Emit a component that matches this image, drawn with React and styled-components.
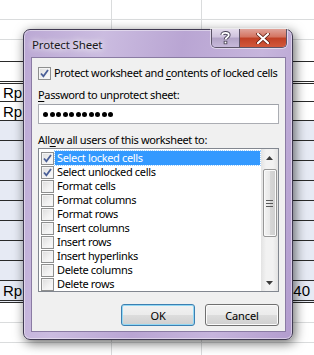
import React from 'react';
import styled, { createGlobalStyle, css } from 'styled-components';

const GlobalStyle = createGlobalStyle`
  html, body {
    margin: 0;
    padding: 0;
    background: #ffffff;
  }
  body {
    font-family: 'Noto Sans', 'Open Sans', sans-serif;
  }
`;

const Screen = styled.div`
  position: relative;
  width: 314px;
  height: 355px;
  overflow: hidden;
  background: #ffffff;
`;

/* ---------- spreadsheet behind the dialog ---------- */

const Sheet = styled.div`
  display: flex;
  flex-direction: column;
  width: 314px;
  height: 355px;
  background-image: linear-gradient(#dadcdd, #dadcdd), linear-gradient(#dadcdd, #dadcdd);
  background-size: 1px 100%, 1px 100%;
  background-position: 111px 0, 201px 0;
  background-repeat: no-repeat;
`;

const SheetRow = styled.div`
  flex: 0 0 ${({ $h }) => $h}px;
  box-sizing: border-box;
  display: flex;
  align-items: center;
  justify-content: space-between;
  padding: 0 4px 0 3px;
  font-family: 'Liberation Sans', Arial, sans-serif;
  font-size: 15px;
  color: #000;
  background-color: ${({ $fill }) => ($fill ? '#e6eaf4' : 'transparent')};
  ${({ $line }) =>
    $line === 'light' &&
    css`
      border-bottom: 1px solid #dadcdd;
    `}
  ${({ $line }) =>
    $line === 'dark' &&
    css`
      border-bottom: 1px solid #2a2a2a;
    `}
  ${({ $line }) =>
    $line === 'double' &&
    css`
      border-bottom: 3px double #2a2a2a;
    `}
`;

/* ---------- dialog ---------- */

const Dialog = styled.div`
  position: absolute;
  left: 23px;
  top: 29px;
  width: 270px;
  height: 311px;
  box-sizing: border-box;
  display: flex;
  flex-direction: column;
  padding: 0 6px 7px 7px;
  border: 1px solid #403a52;
  border-radius: 7px;
  background: linear-gradient(100deg, #bba8d4 0%, #cbbce0 25%, #b9a5d3 50%, #c6b5dc 75%, #b29cce 100%);
  box-shadow: inset 0 0 0 1px rgba(255, 255, 255, 0.45), 2px 3px 12px rgba(0, 0, 0, 0.6);
`;

const TitleBar = styled.div`
  flex: 0 0 27px;
  display: flex;
  align-items: flex-start;
  justify-content: space-between;
`;

const Title = styled.div`
  margin-top: 7px;
  margin-left: 1px;
  font-family: 'Noto Sans', 'Open Sans', sans-serif;
  font-size: 11.5px;
  letter-spacing: -0.15px;
  color: #1a1a1a;
  text-shadow: 0 0 6px #fff, 0 0 10px #fff;
`;

const CaptionButtons = styled.div`
  display: flex;
  margin-top: -1px;
  margin-right: -1px;
  border: 1px solid #5c5468;
  border-top: none;
  border-radius: 0 0 5px 5px;
  overflow: hidden;
  box-shadow: 0 0 0 1px rgba(255, 255, 255, 0.5);
`;

const CaptionButton = styled.div`
  width: ${({ $w }) => $w}px;
  height: 18px;
  display: flex;
  align-items: center;
  justify-content: center;
  background: ${({ $close }) =>
    $close
      ? 'linear-gradient(#e0a39a 0%, #d4735f 45%, #c04025 50%, #d2583c 100%)'
      : 'linear-gradient(#e4dcec 0%, #cfc3dd 45%, #b2a3c6 50%, #c7b9da 100%)'};
  & + & {
    border-left: 1px solid #5c5468;
  }
`;

const Client = styled.div`
  flex: 1;
  display: flex;
  flex-direction: column;
  padding: 0 6px 0 6px;
  background: #f0f0f0;
  border: 1px solid #8a7ba3;
  font-family: 'Noto Sans', 'Open Sans', sans-serif;
  font-size: 11px;
  letter-spacing: -0.35px;
  color: #000;
`;

const CheckRow = styled.label`
  display: flex;
  align-items: center;
  gap: 3px;
  height: ${({ $h }) => $h || 14}px;
  line-height: ${({ $h }) => $h || 14}px;
  white-space: nowrap;
`;

const Box = styled.span`
  flex: 0 0 13px;
  width: 13px;
  height: 13px;
  box-sizing: border-box;
  display: flex;
  align-items: center;
  justify-content: center;
  border: 1px solid #8e8f8f;
  background: linear-gradient(135deg, #dcdcdc 0%, #f2f2f2 60%, #fbfbfb 100%);
  box-shadow: inset 0 0 0 1px #f4f4f4;
`;

const Label = styled.div`
  margin-top: ${({ $mt }) => $mt}px;
  height: 16px;
  line-height: 16px;
  white-space: nowrap;
`;

const Key = styled.span`
  text-decoration: underline;
  text-underline-offset: 2px;
`;

const PasswordInput = styled.div`
  margin-top: 1px;
  height: 20px;
  box-sizing: border-box;
  display: flex;
  align-items: center;
  gap: 1.5px;
  padding-left: 4px;
  background: #fff;
  border: 1px solid #abadb3;
  border-top-color: #9fa2a9;
`;

const Dot = styled.span`
  width: 5px;
  height: 5px;
  border-radius: 50%;
  background: #000;
`;

const ListBox = styled.div`
  height: 144px;
  box-sizing: border-box;
  display: flex;
  background: #fff;
  border: 1px solid #828790;
`;

const Items = styled.div`
  flex: 1;
  display: flex;
  flex-direction: column;
  padding: 2px 1px 0 2px;
  overflow: hidden;
`;

const ItemText = styled.span`
  flex: 1;
  height: 14px;
  line-height: 14px;
  padding-left: 2px;
  margin-left: -2px;
  background: ${({ $selected }) => ($selected ? '#3399ff' : 'transparent')};
  color: ${({ $selected }) => ($selected ? '#fff' : '#000')};
  outline: ${({ $selected }) => ($selected ? '1px dotted #9ccfff' : 'none')};
`;

const ScrollBar = styled.div`
  flex: 0 0 17px;
  display: flex;
  flex-direction: column;
  align-items: center;
  background: linear-gradient(90deg, #e3e3e3, #f2f2f2 30%, #f2f2f2 70%, #e3e3e3);
`;

const Arrow = styled.div`
  flex: 0 0 17px;
  width: 17px;
  display: flex;
  align-items: center;
  justify-content: center;
`;

const Thumb = styled.div`
  margin-top: 3px;
  width: 14px;
  height: 68px;
  box-sizing: border-box;
  display: flex;
  align-items: center;
  justify-content: center;
  border: 1px solid #979797;
  border-radius: 2px;
  background: linear-gradient(90deg, #f3f3f3 0%, #e8e8e8 50%, #d6d6d6 51%, #cfcfcf 100%);
  box-shadow: inset 0 0 0 1px #fafafa;
`;

const ScrollFill = styled.div`
  flex: 1;
`;

const Buttons = styled.div`
  margin-top: 12px;
  display: flex;
  justify-content: flex-end;
  gap: 10px;
`;

const Button = styled.div`
  width: 74px;
  height: 22px;
  box-sizing: border-box;
  display: flex;
  align-items: center;
  justify-content: center;
  border-radius: 3px;
  border: 1px solid ${({ $default }) => ($default ? '#3c7fb1' : '#707070')};
  background: linear-gradient(#f2f2f2 0%, #ebebeb 49%, #dddddd 50%, #cfcfcf 100%);
  box-shadow: inset 0 0 0 1px ${({ $default }) => ($default ? '#93d8f4' : '#fbfbfb')};
  font-size: 11px;
  letter-spacing: -0.1px;
`;

const Check = () => (
  <svg width="9" height="9" viewBox="0 0 9 9">
    <path d="M1 4.5 L3.4 7.3 L8 1" fill="none" stroke="#4a5f97" strokeWidth="1.8" />
  </svg>
);

const helpPath = 'M2.2 4 C2.2 1.2 8.8 1.2 8.8 4 C8.8 6.2 5.5 6.2 5.5 8.6';

const permissions = [
  { label: 'Select locked cells', checked: true, selected: true },
  { label: 'Select unlocked cells', checked: true },
  { label: 'Format cells' },
  { label: 'Format columns' },
  { label: 'Format rows' },
  { label: 'Insert columns' },
  { label: 'Insert rows' },
  { label: 'Insert hyperlinks' },
  { label: 'Delete columns' },
  { label: 'Delete rows' },
];

const sheetRows = [
  { h: 20, line: 'light' },
  { h: 20, line: 'light' },
  { h: 22, line: 'dark' },
  { h: 22, line: 'double' },
  { h: 18, line: 'dark', text: 'Rp' },
  { h: 19, line: 'dark', text: 'Rp' },
  { h: 20, line: 'dark', fill: true },
  { h: 20, line: 'dark', fill: true },
  { h: 20, line: 'dark', fill: true },
  { h: 20, line: 'dark', fill: true },
  { h: 20, line: 'dark', fill: true },
  { h: 20, line: 'dark', fill: true },
  { h: 20, line: 'dark', fill: true },
  { h: 20, line: 'dark', fill: true },
  { h: 22, line: 'double', fill: true, text: 'Rp', value: '340' },
  { h: 20, line: 'light' },
  { h: 20, line: 'light' },
];

export default function App() {
  return (
    <Screen>
      <GlobalStyle />
      <Sheet>
        {sheetRows.map((r, i) => (
          <SheetRow key={i} $h={r.h} $line={r.line} $fill={r.fill}>
            <span>{r.text}</span>
            <span>{r.value}</span>
          </SheetRow>
        ))}
      </Sheet>

      <Dialog>
        <TitleBar>
          <Title>Protect Sheet</Title>
          <CaptionButtons>
            <CaptionButton $w={27}>
              <svg width="11" height="14" viewBox="0 0 11 14">
                <path d={helpPath} fill="none" stroke="#4a4458" strokeWidth="3.6" />
                <rect x="3.7" y="9.8" width="3.6" height="3.4" fill="#4a4458" />
                <path d={helpPath} fill="none" stroke="#ffffff" strokeWidth="1.8" />
                <rect x="4.6" y="10.6" width="1.8" height="1.8" fill="#ffffff" />
              </svg>
            </CaptionButton>
            <CaptionButton $w={46} $close>
              <svg width="14" height="11" viewBox="0 0 14 11">
                <path d="M2 1 L12 10 M12 1 L2 10" stroke="#5a1a10" strokeWidth="3.6" strokeLinecap="round" />
                <path d="M2 1 L12 10 M12 1 L2 10" stroke="#fff" strokeWidth="2.2" strokeLinecap="round" />
              </svg>
            </CaptionButton>
          </CaptionButtons>
        </TitleBar>

        <Client>
          <CheckRow $h={16} style={{ marginTop: '7px' }}>
            <Box>
              <Check />
            </Box>
            <span>
              Protect worksheet and <Key>c</Key>ontents of locked cells
            </span>
          </CheckRow>

          <Label $mt={6}>
            <Key>P</Key>assword to unprotect sheet:
          </Label>
          <PasswordInput>
            {Array.from({ length: 11 }).map((_, i) => (
              <Dot key={i} />
            ))}
          </PasswordInput>

          <Label $mt={8}>
            All<Key>o</Key>w all users of this worksheet to:
          </Label>
          <ListBox>
            <Items>
              {permissions.map((p) => (
                <CheckRow key={p.label}>
                  <Box>{p.checked && <Check />}</Box>
                  <ItemText $selected={p.selected}>{p.label}</ItemText>
                </CheckRow>
              ))}
            </Items>
            <ScrollBar>
              <Arrow>
                <svg width="7" height="4" viewBox="0 0 7 4">
                  <path d="M0 4 L3.5 0 L7 4 Z" fill="#3b3b3b" />
                </svg>
              </Arrow>
              <Thumb>
                <svg width="7" height="7" viewBox="0 0 7 7">
                  <path d="M0 0.5 H7 M0 3.5 H7 M0 6.5 H7" stroke="#5a5a5a" strokeWidth="1" />
                </svg>
              </Thumb>
              <ScrollFill />
              <Arrow>
                <svg width="7" height="4" viewBox="0 0 7 4">
                  <path d="M0 0 L7 0 L3.5 4 Z" fill="#3b3b3b" />
                </svg>
              </Arrow>
            </ScrollBar>
          </ListBox>

          <Buttons>
            <Button $default>OK</Button>
            <Button>Cancel</Button>
          </Buttons>
        </Client>
      </Dialog>
    </Screen>
  );
}
